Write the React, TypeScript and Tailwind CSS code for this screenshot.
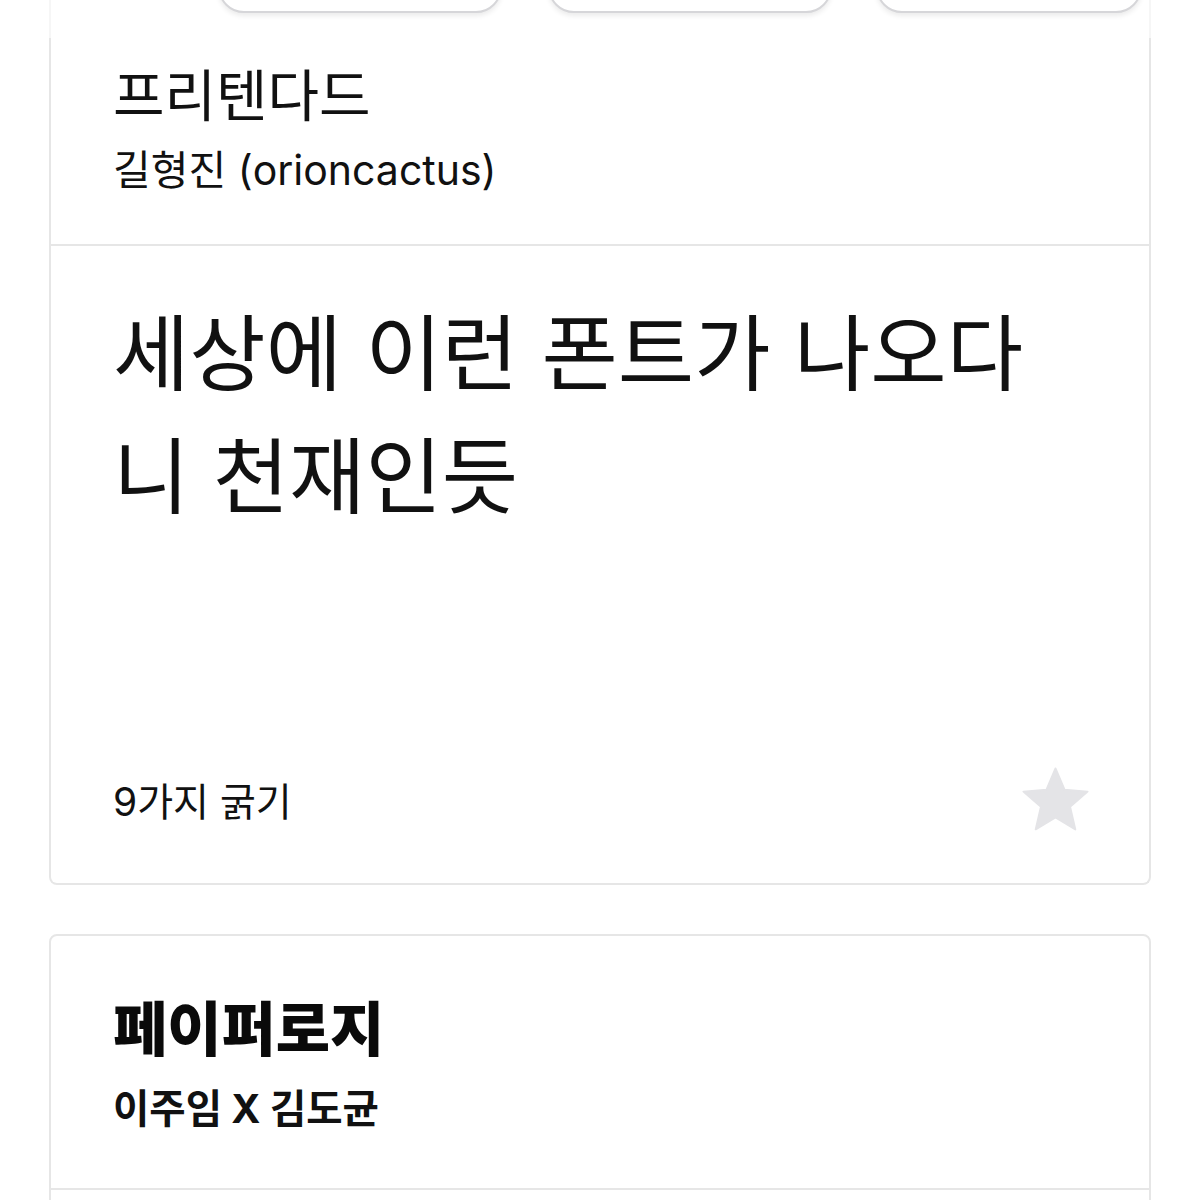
import React from "react";

const FONT = { fontFamily: '"Inter", "Noto Sans CJK KR", sans-serif' };

interface FontCard {
  name: string;
  author: string;
  bold?: boolean;
}

function StarIcon() {
  return (
    <svg width="77" height="77" viewBox="0 0 24 24" className="shrink-0">
      <path
        d="M12 17.27L18.18 21l-1.64-7.03L22 9.24l-7.19-.61L12 2 9.19 8.63 2 9.24l5.46 4.73L5.82 21z"
        fill="#e4e4e7"
        stroke="#e4e4e7"
        strokeWidth="0.6"
        strokeLinejoin="round"
      />
    </svg>
  );
}

function CardHeader({ card }: { card: FontCard }) {
  return (
    <div className={card.bold ? "px-[62px] pt-[56px] h-[252px]" : "px-[62px] pt-[20px] h-[206px]"}>
      <h2
        className={
          card.bold
            ? "text-[59px] leading-[76px] font-black text-[#0a0a0a]"
            : "text-[56px] leading-[76px] font-normal text-[#111111]"
        }
      >
        {card.name}
      </h2>
      <p
        className={
          card.bold
            ? "mt-[16px] text-[39.5px] leading-[50px] font-bold text-[#111111]"
            : "mt-[11px] text-[41px] leading-[50px] font-normal text-[#111111]"
        }
      >
        {card.author}
      </p>
    </div>
  );
}

export default function App() {
  const first: FontCard = { name: "프리텐다드", author: "길형진 (orioncactus)" };
  const second: FontCard = { name: "페이퍼로지", author: "이주임 X 김도균", bold: true };

  return (
    <div className="w-[1200px] min-h-[1200px] bg-white overflow-hidden" style={FONT}>
      {/* filter buttons, scrolled mostly out of view */}
      <div className="mx-[49px] h-[38px] border-x-2 border-[#f6f6f6] flex items-end pb-[25px] overflow-hidden">
        <div className="ml-[167px] w-[284px] h-[70px] shrink-0 rounded-[26px] border-2 border-[#d6d6d9] bg-white shadow-[0_3px_5px_rgba(0,0,0,0.08)]" />
        <div className="ml-[46px] w-[284px] h-[70px] shrink-0 rounded-[26px] border-2 border-[#d6d6d9] bg-white shadow-[0_3px_5px_rgba(0,0,0,0.08)]" />
        <div className="ml-[44px] w-[266px] h-[70px] shrink-0 rounded-[26px] border-2 border-[#d6d6d9] bg-white shadow-[0_3px_5px_rgba(0,0,0,0.08)]" />
      </div>

      {/* Pretendard card */}
      <div className="mx-[49px] border-2 border-t-0 border-[#e6e6e6] rounded-b-[8px]">
        <CardHeader card={first} />
        <div className="border-t-2 border-[#e6e6e6] px-[62px] pt-[47px] h-[639px] flex flex-col">
          <p className="text-[83px] leading-[123px] text-[#111111]">
            세상에 이런 폰트가 나오다니 천재인듯
          </p>
          <div className="mt-auto mb-[44px] flex items-center justify-between">
            <span className="text-[39px] text-[#111111] mt-[4px]">9가지 굵기</span>
            <div className="mr-[-7px]">
              <StarIcon />
            </div>
          </div>
        </div>
      </div>

      {/* Paperlogy card */}
      <div className="mx-[49px] mt-[49px] border-2 border-[#e6e6e6] rounded-[8px]">
        <CardHeader card={second} />
        <div className="border-t-2 border-[#e6e6e6] h-[200px]" />
      </div>
    </div>
  );
}
